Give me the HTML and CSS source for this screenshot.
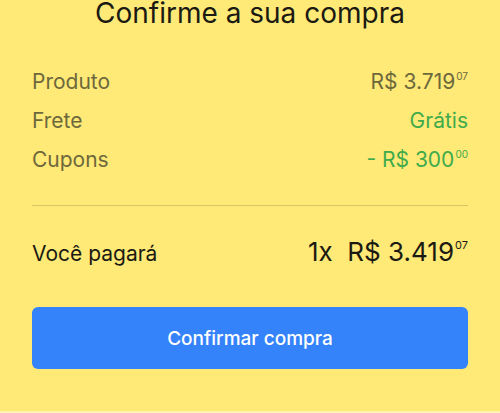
FILE: index.html
```html
<!DOCTYPE html>
<html lang="pt-BR">
<head>
    <meta charset="UTF-8">
    <meta name="viewport" content="width=device-width, initial-scale=1.0">
    <title>Confirme a sua compra</title>
    <link rel="stylesheet" href="styles.css">
</head>
<body>
    <section class="resumo">
        <h1 class="titulo">Confirme a sua compra</h1>
        <ul class="itens">
            <li class="item">
                <span>Produto</span>
                <span class="valor">R$ 3.719<sup class="centavos">07</sup></span>
            </li>
            <li class="item">
                <span>Frete</span>
                <span class="valor verde">Grátis</span>
            </li>
            <li class="item">
                <span>Cupons</span>
                <span class="valor verde">- R$ 300<sup class="centavos">00</sup></span>
            </li>
        </ul>
        <div class="total">
            <span>Você pagará</span>
            <span class="total-valor">1x&nbsp; R$ 3.419<sup class="centavos">07</sup></span>
        </div>
        <button class="botao">Confirmar compra</button>
    </section>
    <div class="rodape"></div>
</body>
</html>
```

FILE: styles.css
```css
*{
    box-sizing: border-box;
    font-family: Inter, "Open Sans", Arial, sans-serif;
}
body{
    margin: 0;
    background-color: #ffe977;
}
.resumo{
    padding: 0 32px;
}
.titulo{
    margin: 0;
    font-size: 28px;
    font-weight: 400;
    line-height: 24px;
    padding-top: 1px;
    text-align: center;
    color: #1b1a12;
}
.itens{
    list-style: none;
    margin: 37px 0 0;
    padding: 0 0 26px;
    border-bottom: 1px solid #d8c664;
}
.item{
    display: flex;
    justify-content: space-between;
    font-size: 21px;
    line-height: 39px;
    color: #6d683c;
}
.verde{
    color: #40ab4a;
}
.centavos{
    font-size: 10px;
    vertical-align: 0.9em;
    line-height: 0;
    margin-left: 1px;
}
.total{
    display: flex;
    justify-content: space-between;
    align-items: baseline;
    margin-top: 30px;
    line-height: 32px;
    color: #1b1a12;
    font-size: 21px;
}
.total-valor{
    font-size: 26px;
}
.total-valor .centavos{
    font-size: 11px;
    vertical-align: 1.1em;
}
.botao{
    display: block;
    width: 100%;
    height: 62px;
    margin-top: 37px;
    border: none;
    border-radius: 6px;
    background-color: #3483fa;
    color: white;
    font-size: 19px;
    font-weight: 500;
}
.rodape{
    margin-top: 42px;
    height: 2px;
    background-color: #fff3b0;
}
```
